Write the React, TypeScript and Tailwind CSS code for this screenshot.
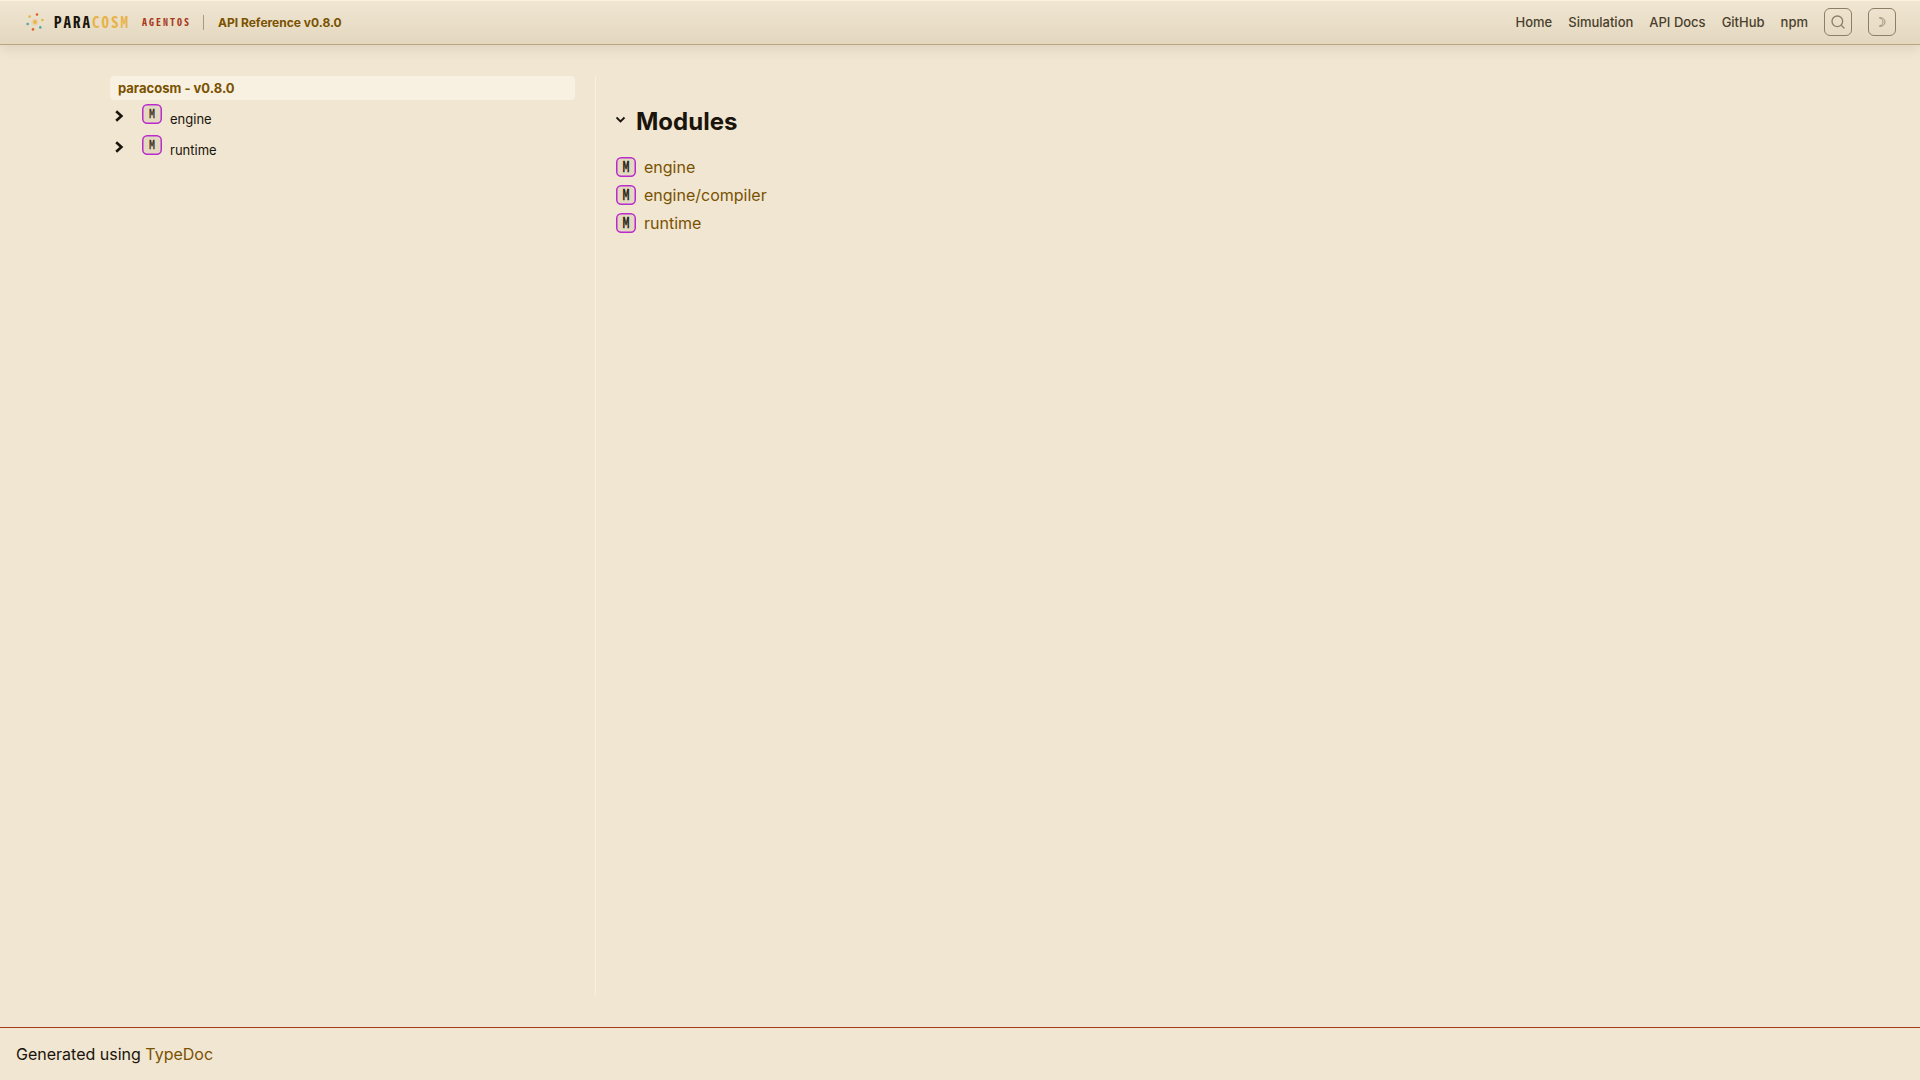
import { Search } from 'lucide-react';

const navLinks = ['Home', 'Simulation', 'API Docs', 'GitHub', 'npm'];
const treeItems = ['engine', 'runtime'];
const modules = ['engine', 'engine/compiler', 'runtime'];

function ModuleIcon({ muted = false }: { muted?: boolean }) {
  return (
    <svg viewBox="0 0 20 20" className="h-5 w-5 shrink-0" aria-hidden="true">
      <rect x="0.75" y="0.75" width="18.5" height="18.5" rx="4.5" fill="#e3d8c0" stroke="#b92bcb" strokeWidth="1.5" />
      <text
        x="10"
        y={muted ? 14 : 15}
        textAnchor="middle"
        fill={muted ? '#3a3020' : '#1a140b'}
        stroke={muted ? '#3a3020' : '#1a140b'}
        strokeWidth="0.3"
        className={
          muted
            ? "font-['Noto_Sans_Mono_CJK_SC','DejaVu_Sans_Mono',monospace] text-[12px]"
            : "font-['Noto_Sans_Mono_CJK_SC','DejaVu_Sans_Mono',monospace] text-[14px]"
        }
      >
        M
      </text>
    </svg>
  );
}

function Logo() {
  return (
    <svg viewBox="0 0 22 22" className="h-[22px] w-[22px]" aria-hidden="true">
      <circle cx="11" cy="11" r="3.5" fill="#e8b44a" opacity="0.2" />
      <circle cx="11" cy="11" r="1.9" fill="#e8b44a" />
      <circle cx="13" cy="3.6" r="1.3" fill="#e06530" />
      <circle cx="5.6" cy="5.6" r="1.3" fill="#e8b44a" />
      <circle cx="18.4" cy="9" r="1.3" fill="#e8b44a" />
      <circle cx="3.7" cy="13" r="1.3" fill="#4ca8a8" />
      <circle cx="16.3" cy="16.4" r="1.3" fill="#4ca8a8" />
      <circle cx="9" cy="18.4" r="1.3" fill="#e06530" />
    </svg>
  );
}

function Header() {
  return (
    <header className="sticky top-0 z-10 flex h-[45px] items-center justify-between border-b border-[#b8a77c] bg-linear-to-b from-[#f0e6d2] to-[#e3d7bf] px-6 shadow-[0_4px_12px_rgba(60,45,15,0.1),inset_0_1px_0_rgba(255,250,235,0.6)]">
      <div className="flex items-center gap-3">
        <a href="#" className="flex items-center gap-2 font-['Noto_Sans_Mono_CJK_SC','DejaVu_Sans_Mono',monospace] font-bold">
          <Logo />
          <span className="text-[15px] leading-5 tracking-[2px] text-[#1a140b]">
            PARA<span className="text-[#e8b44a]">COSM</span>
          </span>
        </a>
        <a href="#" className="font-['Noto_Sans_Mono_CJK_SC','DejaVu_Sans_Mono',monospace] text-[10px] leading-4 font-bold tracking-[2px] text-[#a83a1c]">
          AGENTOS
        </a>
        <span className="h-[15px] w-px bg-[#a89b82]" />
        <a href="#" className="pt-0.5 pl-0.5 text-xs font-bold text-[#7a5200]">
          API Reference v0.8.0
        </a>
      </div>

      <div className="flex items-center gap-4">
        <nav className="flex items-center gap-4 pt-0.5 text-[13px] font-medium text-[#4a3f2c]">
          {navLinks.map((label) => (
            <a key={label} href="#">{label}</a>
          ))}
        </nav>
        <button
          type="button"
          aria-label="Search"
          className="flex h-7 w-7 items-center justify-center rounded-md border border-[#8c7f68] text-[#8c7f68]"
        >
          <Search className="h-4 w-4" strokeWidth={2} />
        </button>
        <button
          type="button"
          aria-label="Toggle theme"
          className="flex h-7 w-7 items-center justify-center rounded-md border border-[#8c7f68] text-[#8c7f68]"
        >
          <svg viewBox="0 0 10 10" className="h-2.5 w-2.5" fill="none" stroke="currentColor" strokeWidth="0.8" aria-hidden="true">
            <path d="M2.3 0.8C5.3 0.2 8 2.2 8 5S5.3 9.8 2.3 9.2C4.7 8.5 6 7 6 5S4.7 1.5 2.3 0.8Z" />
          </svg>
        </button>
      </div>
    </header>
  );
}

function Sidebar() {
  return (
    <aside className="w-[465px] shrink-0">
      <a href="#" className="block rounded bg-[#f8f0e1] px-2 text-[13px] leading-6 font-bold text-[#7a5200]">
        paracosm - v0.8.0
      </a>
      <ul>
        {treeItems.map((name) => (
          <li key={name} className="flex h-[31px] items-start pt-1 pl-1">
            <button type="button" aria-label={`Expand ${name}`} className="mt-1.5 h-3 w-3">
              <svg viewBox="0 0 12 12" className="h-3 w-3" fill="none" stroke="#1a140b" strokeWidth="2.6">
                <path d="M2.2 1.2L7.4 6L2.2 10.8" />
              </svg>
            </button>
            <a href="#" className="ml-4 flex items-start gap-2 text-[13px] leading-5 text-[#1a140b]">
              <ModuleIcon muted />
              <span className="pt-[5px]">{name}</span>
            </a>
          </li>
        ))}
      </ul>
    </aside>
  );
}

export default function App() {
  return (
    <div className="flex min-h-screen flex-col bg-[#f0e6d2] font-['Inter',sans-serif] text-[#1a140b]">
      <Header />

      <div className="mx-auto flex w-full max-w-[1700px] flex-1 gap-5 pt-[31px] pb-8">
        <Sidebar />

        <main className="flex-1 border-l border-[#f8f0e1] pt-[30px] pl-5">
          <h2 className="flex items-center gap-2 text-2xl font-bold">
            <svg viewBox="0 0 12 12" className="h-3 w-3" fill="none" stroke="#1a140b" strokeWidth="1.8" aria-hidden="true">
              <path d="M0.5 1.5L4.5 5.5L8.5 1.5" />
            </svg>
            Modules
          </h2>
          <ul className="mt-[17px] flex flex-col gap-1">
            {modules.map((name) => (
              <li key={name}>
                <a href="#" className="flex items-center gap-2 text-base text-[#7a5200]">
                  <ModuleIcon />
                  {name}
                </a>
              </li>
            ))}
          </ul>
        </main>
      </div>

      <footer className="border-t border-[#a83a1c] px-4 py-[14px]">
        <p>
          Generated using <a href="#" className="text-[#7a5200]">TypeDoc</a>
        </p>
      </footer>
    </div>
  );
}
